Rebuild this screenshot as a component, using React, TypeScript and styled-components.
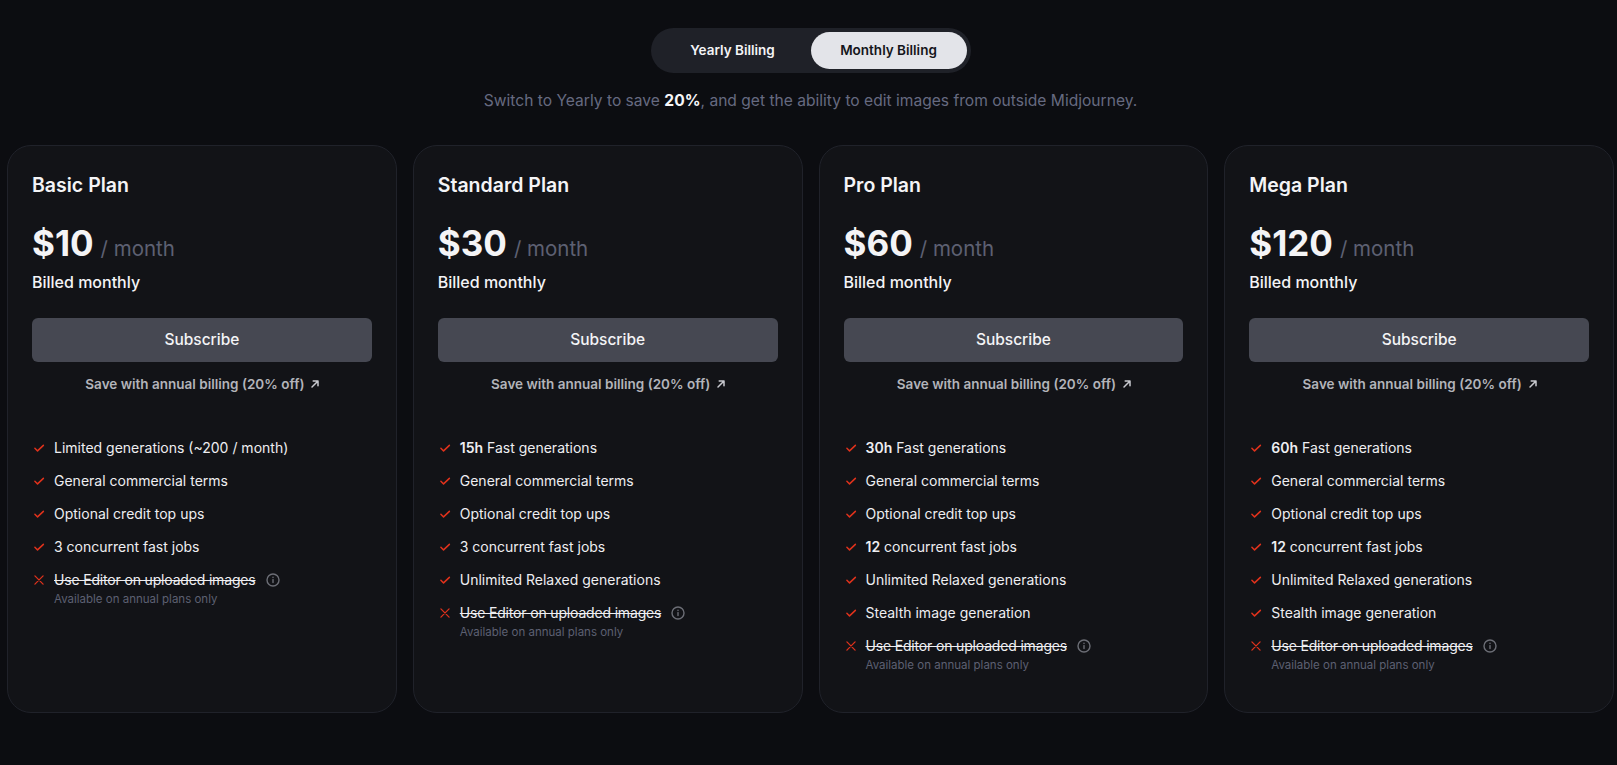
import React from 'react'
import styled, { createGlobalStyle } from 'styled-components';

const GlobalStyle = createGlobalStyle`
html, body {
    margin: 0;
    padding: 0;
    background: #0c0d11;
    font-family: "Inter", "Liberation Sans", sans-serif;
    color: #f4f4f6;
}
* { box-sizing: border-box; }
`;

interface Feature {
    text: string;
    bold?: string;
}

interface Plan {
    name: string;
    price: string;
    features: Feature[];
}

const shared: Feature[] = [
    { text: 'General commercial terms' },
    { text: 'Optional credit top ups' },
];

const plans: Plan[] = [
    {
        name: 'Basic Plan',
        price: '$10',
        features: [
            { text: 'Limited generations (~200 / month)' },
            ...shared,
            { text: '3 concurrent fast jobs' },
        ],
    },
    {
        name: 'Standard Plan',
        price: '$30',
        features: [
            { text: ' Fast generations', bold: '15h' },
            ...shared,
            { text: '3 concurrent fast jobs' },
            { text: 'Unlimited Relaxed generations' },
        ],
    },
    {
        name: 'Pro Plan',
        price: '$60',
        features: [
            { text: ' Fast generations', bold: '30h' },
            ...shared,
            { text: ' concurrent fast jobs', bold: '12' },
            { text: 'Unlimited Relaxed generations' },
            { text: 'Stealth image generation' },
        ],
    },
    {
        name: 'Mega Plan',
        price: '$120',
        features: [
            { text: ' Fast generations', bold: '60h' },
            ...shared,
            { text: ' concurrent fast jobs', bold: '12' },
            { text: 'Unlimited Relaxed generations' },
            { text: 'Stealth image generation' },
        ],
    },
];

const CheckIcon = () => (
    <svg width="14" height="14" viewBox="0 0 24 24" fill="none" stroke="#e0321c" strokeWidth="2.6" strokeLinecap="round" strokeLinejoin="round">
        <path d="M5 12.5l4.5 4.5L19.5 7.5" />
    </svg>
);

const CrossIcon = () => (
    <svg width="14" height="14" viewBox="0 0 24 24" fill="none" stroke="#e0321c" strokeWidth="2.2" strokeLinecap="round">
        <path d="M5 5l14 14M19 5L5 19" />
    </svg>
);

const ArrowIcon = () => (
    <svg width="12" height="12" viewBox="0 0 12 12" fill="none" stroke="#c9cad0" strokeWidth="1.5" strokeLinecap="round" strokeLinejoin="round">
        <path d="M3 9l6-6M4.2 3H9v4.8" />
    </svg>
);

const InfoIcon = () => (
    <svg width="14" height="14" viewBox="0 0 14 14" fill="none" stroke="#6c6e76" strokeWidth="1.4" strokeLinecap="round">
        <circle cx="7" cy="7" r="6" />
        <path d="M7 6.6v3" />
        <path d="M7 4.2v.3" />
    </svg>
);

const App = () => {
    return (
        <Page>
            <GlobalStyle />
            <Toggle>
                <ToggleOption>Yearly Billing</ToggleOption>
                <ToggleOption $active>Monthly Billing</ToggleOption>
            </Toggle>
            <Note>
                Switch to Yearly to save <strong>20%</strong>, and get the ability to edit images from outside Midjourney.
            </Note>
            <Cards>
                {plans.map((plan) => (
                    <Card key={plan.name}>
                        <PlanName>{plan.name}</PlanName>
                        <PriceRow>
                            <Price>{plan.price}</Price>
                            <Period>/ month</Period>
                        </PriceRow>
                        <Billed>Billed monthly</Billed>
                        <SubscribeButton>Subscribe</SubscribeButton>
                        <SaveLink>
                            Save with annual billing (20% off) <ArrowIcon />
                        </SaveLink>
                        <Features>
                            {plan.features.map((feature, i) => (
                                <FeatureRow key={i}>
                                    <IconSlot><CheckIcon /></IconSlot>
                                    <span>
                                        {feature.bold && <strong>{feature.bold}</strong>}
                                        {feature.text}
                                    </span>
                                </FeatureRow>
                            ))}
                            <FeatureRow>
                                <IconSlot><CrossIcon /></IconSlot>
                                <div>
                                    <Struck>
                                        <s>Use Editor on uploaded images</s>
                                        <InfoIcon />
                                    </Struck>
                                    <Hint>Available on annual plans only</Hint>
                                </div>
                            </FeatureRow>
                        </Features>
                    </Card>
                ))}
            </Cards>
        </Page>
    )
}

const Page = styled.div`
min-height: 765px;
padding: 28px 3px 0 7px;
display: flex;
flex-direction: column;
align-items: center;
`;

const Toggle = styled.div`
display: flex;
align-items: center;
height: 45px;
padding: 4px;
border-radius: 23px;
background: #1f2128;
`;

const ToggleOption = styled.div<{ $active?: boolean }>`
width: 156px;
height: 37px;
display: flex;
align-items: center;
justify-content: center;
border-radius: 19px;
font-size: 13.5px;
font-weight: 600;
padding-bottom: 1px;
background: ${(props) => (props.$active ? '#e3e4e9' : 'transparent')};
color: ${(props) => (props.$active ? '#14151a' : '#f4f4f6')};
`;

const Note = styled.p`
margin: 16px 0 0;
font-size: 15.6px;
line-height: 24px;
color: #666a80;
strong {
    color: #f6f6f8;
    font-weight: 700;
}
`;

const Cards = styled.div`
width: 100%;
margin-top: 32px;
display: grid;
grid-template-columns: repeat(4, 1fr);
gap: 16px;
`;

const Card = styled.div`
height: 568px;
padding: 27px 24px 28px;
border: 1px solid #20222a;
border-radius: 24px;
background: #121317;
`;

const PlanName = styled.h2`
margin: 0;
font-size: 19.5px;
line-height: 24px;
font-weight: 600;
color: #f4f4f6;
`;

const PriceRow = styled.div`
margin-top: 24px;
display: flex;
align-items: baseline;
gap: 7px;
`;

const Price = styled.span`
font-size: 35px;
line-height: 44px;
font-weight: 700;
color: #f4f4f6;
`;

const Period = styled.span`
font-size: 20.5px;
color: #5d6072;
`;

const Billed = styled.div`
margin-top: 5px;
font-size: 16px;
line-height: 24px;
font-weight: 500;
color: #f4f4f6;
`;

const SubscribeButton = styled.button`
display: block;
width: 100%;
height: 44px;
margin-top: 24px;
padding: 0 0 2px;
border: none;
outline: none;
border-radius: 6px;
background: #464852;
color: #f4f4f6;
font-family: inherit;
font-size: 15.5px;
font-weight: 500;
cursor: pointer;
`;

const SaveLink = styled.div`
margin-top: 12px;
padding-left: 3px;
display: flex;
align-items: center;
justify-content: center;
gap: 5px;
font-size: 13.5px;
line-height: 20px;
font-weight: 600;
color: #b3b4ba;
`;

const Features = styled.ul`
margin: 44px 0 0;
padding: 0;
list-style: none;
display: flex;
flex-direction: column;
gap: 13px;
`;

const FeatureRow = styled.li`
display: flex;
align-items: flex-start;
gap: 8px;
font-size: 14px;
line-height: 20px;
color: #eeeef1;
strong {
    font-weight: 600;
}
`;

const IconSlot = styled.span`
flex: none;
height: 20px;
display: flex;
align-items: center;
`;

const Struck = styled.div`
display: flex;
align-items: center;
gap: 10px;
s {
    letter-spacing: -0.17px;
}
`;

const Hint = styled.div`
margin-top: 1px;
font-size: 11.5px;
line-height: 16px;
color: #5d6072;
`;

export default App
